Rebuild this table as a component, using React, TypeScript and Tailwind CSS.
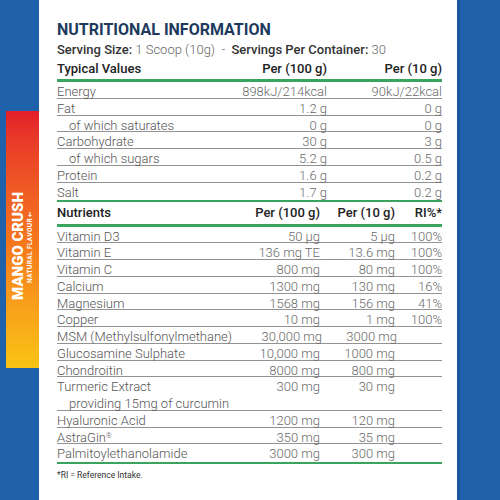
import React from "react";

const typical: [string, string, string, boolean?][] = [
  ["Energy", "898kJ/214kcal", "90kJ/22kcal"],
  ["Fat", "1.2 g", "0 g"],
  ["of which saturates", "0 g", "0 g", true],
  ["Carbohydrate", "30 g", "3 g"],
  ["of which sugars", "5.2 g", "0.5 g", true],
  ["Protein", "1.6 g", "0.2 g"],
  ["Salt", "1.7 g", "0.2 g"],
];

type N = { l: React.ReactNode; a: string; b: string; r: string; indent?: boolean; noBorder?: boolean };
const nutrients: N[] = [
  { l: "Vitamin D3", a: "50 µg", b: "5 µg", r: "100%" },
  { l: "Vitamin E", a: "136 mg TE", b: "13.6 mg", r: "100%" },
  { l: "Vitamin C", a: "800 mg", b: "80 mg", r: "100%" },
  { l: "Calcium", a: "1300 mg", b: "130 mg", r: "16%" },
  { l: "Magnesium", a: "1568 mg", b: "156 mg", r: "41%" },
  { l: "Copper", a: "10 mg", b: "1 mg", r: "100%" },
  { l: "MSM (Methylsulfonylmethane)", a: "30,000 mg", b: "3000 mg", r: "" },
  { l: "Glucosamine Sulphate", a: "10,000 mg", b: "1000 mg", r: "" },
  { l: "Chondroitin", a: "8000 mg", b: "800 mg", r: "" },
  { l: "Turmeric Extract", a: "300 mg", b: "30 mg", r: "", noBorder: true },
  { l: "providing 15mg of curcumin", a: "", b: "", r: "", indent: true },
  { l: "Hyaluronic Acid", a: "1200 mg", b: "120 mg", r: "" },
  { l: (<>AstraGin<sup className="text-[7px]">®</sup></>), a: "350 mg", b: "35 mg", r: "" },
  { l: "Palmitoylethanolamide", a: "3000 mg", b: "300 mg", r: "", noBorder: true },
];

export default function App() {
  return (
    <div className="w-[500px] h-[500px] flex bg-white overflow-hidden" style={{ fontFamily: "Roboto, 'Liberation Sans', sans-serif" }}>
      <div className="w-[39px] h-full bg-[#1f62ab] pt-[111px] pl-[6px]">
        <div className="w-[33px] h-[257px] bg-gradient-to-b from-[#e41d2a] via-[#f4751c] to-[#f9c414] flex justify-center items-center pt-[13px]">
          <div className="[writing-mode:vertical-rl] rotate-180 flex flex-col items-center whitespace-nowrap text-white">
            <span className="font-black text-[15px] leading-[15px]">MANGO CRUSH</span>
            <span className="font-bold text-[6.5px] leading-[8px] tracking-[0.4px]">NATURAL FLAVOUR†</span>
          </div>
        </div>
      </div>
      <div className="w-[418px] h-full pl-[18px] pr-[15px] pt-[20px]">
        <div className="text-[#1d3a5d] font-bold text-[16px] leading-[20px]">NUTRITIONAL INFORMATION</div>
        <div className="text-[13px] leading-[18px] mt-[1px] text-[#666] font-light whitespace-nowrap">
          <span className="font-medium text-[#333]">Serving Size:</span> 1 Scoop (10g)&nbsp; - &nbsp;<span className="font-medium text-[#333]">Servings Per Container:</span> 30
        </div>
        <div className="grid grid-cols-[1fr_100px_115px] text-[13px] font-medium text-[#222] h-[20px] items-center">
          <span>Typical Values</span>
          <span className="text-right">Per (100 g)</span>
          <span className="text-right">Per (10 g)</span>
        </div>
        <div className="h-[3px] bg-[#3aa35d]" />
        {typical.map(([l, a, b, ind], i) => (
          <div key={i} className={`grid grid-cols-[1fr_100px_115px] h-[16.8px] items-center text-[13px] font-light text-[#555] ${i < typical.length - 1 ? "border-b border-[#939393]" : ""}`}>
            <span className={ind ? "pl-[12px]" : ""}>{l}</span>
            <span className="text-right text-[#6a6a6a]">{a}</span>
            <span className="text-right text-[#6a6a6a]">{b}</span>
          </div>
        ))}
        <div className="h-[2px] bg-[#3aa35d]" />
        <div className="grid grid-cols-[1fr_90px_75px_47px] text-[13px] font-medium text-[#222] h-[22px] items-center">
          <span>Nutrients</span>
          <span className="text-right">Per (100 g)</span>
          <span className="text-right">Per (10 g)</span>
          <span className="text-right">RI%*</span>
        </div>
        <div className="h-[3px] bg-[#3aa35d]" />
        {nutrients.map((n, i) => (
          <div key={i} className={`grid grid-cols-[1fr_90px_75px_47px] h-[16.75px] items-center text-[13px] font-light text-[#555] whitespace-nowrap ${n.noBorder ? "" : "border-b border-[#939393]"}`}>
            <span className={n.indent ? "pl-[12px]" : ""}>{n.l}</span>
            <span className="text-right text-[#6a6a6a]">{n.a}</span>
            <span className="text-right text-[#6a6a6a]">{n.b}</span>
            <span className="text-right text-[#6a6a6a]">{n.r}</span>
          </div>
        ))}
        <div className="h-[2px] bg-[#3aa35d] mt-[1px]" />
        <div className="text-[8.5px] text-[#333] mt-[6px] leading-[10px]">*RI = Reference Intake.</div>
      </div>
      <div className="w-[43px] h-full bg-[#1f62ab] border-l-[3px] border-[#1a55a0]" />
    </div>
  );
}
